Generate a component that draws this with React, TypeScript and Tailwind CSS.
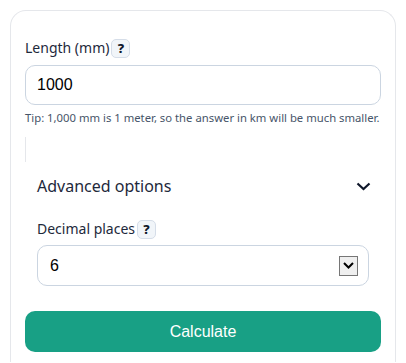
import React, { useState } from 'react';

const HelpBadge = () => (
  <span className="ml-[2px] inline-flex h-[19px] w-[19px] items-center justify-center rounded-[5px] border border-[#d5dde8] bg-[#f1f5f9] text-[13px] font-extrabold leading-none text-[#0f172a]">
    ?
  </span>
);

const App: React.FC = () => {
  const [length, setLength] = useState('1000');
  const [decimals, setDecimals] = useState('6');

  return (
    <div className="min-h-screen bg-white px-[10px] pt-[10px] font-['Noto_Sans',sans-serif] text-[#1e293b]">
      <div className="rounded-t-[16px] border border-b-0 border-[#e5e7eb] px-[14px] pt-[27px] pb-[10px]">
        <div className="flex items-center text-[14px] leading-[20px]">
          Length (mm)
          <HelpBadge />
        </div>
        <input
          value={length}
          onChange={e => setLength(e.target.value)}
          className="mt-[7px] block h-[40px] w-full rounded-[10px] border border-[#cbd5e1] px-[11px] font-['Liberation_Sans',sans-serif] text-[16px] text-black outline-none"
        />
        <p className="mt-[5px] text-[11.3px] leading-[16px] text-[#475569]">
          Tip: 1,000 mm is 1 meter, so the answer in km will be much smaller.
        </p>

        <div className="mt-[11px] h-[25px] w-px bg-[#e5e7eb]" />

        <div className="px-[12px]">
          <div className="mt-[13px] flex items-center justify-between">
            <span className="text-[16px] leading-[22px]">Advanced options</span>
            <svg width="15" height="9" viewBox="0 0 15 9" className="-mr-[2px]">
              <path d="M1.5 1.5 L7.5 7 L13.5 1.5" fill="none" stroke="#0f172a" strokeWidth="2.2" />
            </svg>
          </div>

          <div className="mt-[22px] flex items-center text-[14px] leading-[20px]">
            Decimal places
            <HelpBadge />
          </div>
          <div className="mt-[6px] flex h-[41px] items-center justify-between rounded-[10px] border border-[#cbd5e1] pl-[12px] pr-[10px] font-['Liberation_Sans',sans-serif] text-[16px] text-black">
            <span onClick={() => setDecimals(decimals)}>{decimals}</span>
            <span className="flex h-[20px] w-[19px] items-center justify-center border border-[#767676] bg-[#efefef]">
              <svg width="11" height="7" viewBox="0 0 11 7">
                <path d="M1 1 L5.5 5.5 L10 1" fill="none" stroke="#000" strokeWidth="2" />
              </svg>
            </span>
          </div>
        </div>

        <button className="mt-[25px] flex h-[41px] w-full items-center justify-center rounded-[10px] bg-[#18a085] font-['Liberation_Sans',sans-serif] text-[16px] text-white">
          Calculate
        </button>
      </div>
    </div>
  );
};

export default App;
